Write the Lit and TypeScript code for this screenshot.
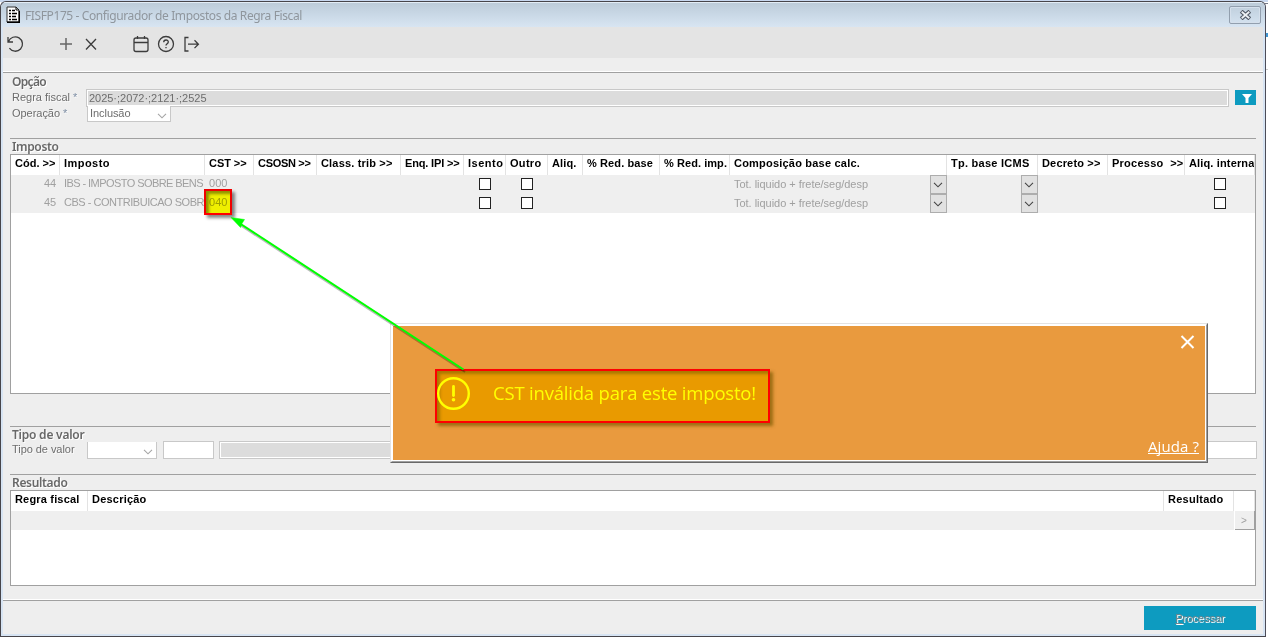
import { LitElement, html, css, svg, nothing } from "lit";
import { customElement, property } from "lit/decorators.js";
import { classMap } from "lit/directives/class-map.js";
import { styleMap } from "lit/directives/style-map.js";

/** One line of text whose tracking is adjusted so that it spans a given width. */
@customElement("fit-text")
class FitText extends LitElement {
  static styles = css`
    :host { display: inline-block; white-space: pre; flex: none; line-height: 14px; }
    span { display: inline-block; }
  `;
  @property({ type: Number }) w = 0;
  @property() text = "";
  render() {
    return html`<span>${this.text}</span>`;
  }
  updated() {
    const s = this.renderRoot.querySelector("span") as HTMLElement;
    s.style.letterSpacing = "0px";
    const natural = s.getBoundingClientRect().width;
    if (this.w && this.text.length > 1) {
      s.style.letterSpacing = (this.w - natural) / this.text.length + "px";
    }
  }
}

interface Column { label: string; width: number; text: number; }

const COLUMNS: Column[] = [
  { label: "Cód. >>", width: 49, text: 40.5 },
  { label: "Imposto", width: 145, text: 46 },
  { label: "CST >>", width: 49, text: 37.5 },
  { label: "CSOSN >>", width: 63, text: 52.5 },
  { label: "Class. trib >>", width: 84, text: 71.5 },
  { label: "Enq. IPI >>", width: 63, text: 54.5 },
  { label: "Isento", width: 42, text: 35.5 },
  { label: "Outro", width: 42, text: 31.5 },
  { label: "Aliq.", width: 35, text: 24.5 },
  { label: "% Red. base", width: 77, text: 66 },
  { label: "% Red. imp.", width: 70, text: 63 },
  { label: "Composição base calc.", width: 217, text: 126 },
  { label: "Tp. base ICMS", width: 91, text: 78.5 },
  { label: "Decreto >>", width: 70, text: 58.5 },
  { label: "Processo  >>", width: 77, text: 71.5 },
  { label: "Aliq. interna", width: 70, text: 65.5 },
];

const ROWS = [
  { code: "44", name: "IBS - IMPOSTO SOBRE BENS", nameW: 139, cst: "000" },
  { code: "45", name: "CBS - CONTRIBUICAO SOBR", nameW: 140, cst: "040" },
];

const chevron = html`<svg class="chev" width="10" height="6" viewBox="0 0 10 6"><path d="M1 .8 5 4.8 9 .8" fill="none" stroke="currentColor" stroke-width="1.1"/></svg>`;

@customElement("app-root")
class AppRoot extends LitElement {
  static styles = css`
    :host { display: block; width: 1268px; height: 637px; position: relative; overflow: hidden; background: #fff;
      font: 11px/14px "Liberation Sans", Arial, sans-serif; color: #6d6d6d; }
    * { box-sizing: border-box; }
    svg { display: block; flex: none; }
    .desk { height: 637px; background: linear-gradient(#c9d8ef 0 2px, #fff 2px); padding-top: 1px; }
    .win { width: 1266px; height: 636px; border: 1px solid #47454a; border-right-color: #4c4c58; border-bottom-width: 1px;
      border-radius: 6px 6px 0 0; background: #d7e4f3; padding: 0 2px 2px; display: flex; flex-direction: column; overflow: hidden; }
    .title { height: 25px; flex: none; margin: 0 -2px; padding: 0 4px 0 5px; display: flex; align-items: center;
      background: linear-gradient(#e3edf6 0 1px, #bdccd9 1px, #c9d8e6 50%, #d8e5f2);
      border-radius: 5px 5px 0 0; color: #8f969d; font: 12px "Noto Sans", sans-serif; }
    .title fit-text { margin: 3px 0 0 5px; }
    .close { margin: 0 0 0 auto; width: 32px; height: 18px; border: 1px solid #929fae; border-radius: 2px;
      box-shadow: inset 0 0 0 1px #d5e0ec; display: flex; align-items: center; justify-content: center; }
    .tools { height: 31px; flex: none; background: #e4e4e4; padding-left: 2px; }
    .body { flex: 1; background: #eeeeee; display: flex; flex-direction: column; }
    .rule { height: 2px; border-top: 1px solid #fff; background: #a0a0a0; flex: none; }
    .sec { margin: 0 7px; flex: none; display: flex; flex-direction: column; }
    .line { border-top: 1px solid #a0a0a0; }
    h2 { margin: 0; padding: 1px 0 0 2px; height: 15px; font: 600 12px/14px "Noto Sans", sans-serif; color: #686868; text-shadow: 1px 1px #fff; }
    .field { display: flex; align-items: flex-start; padding-left: 2px; }
    .field > * { flex: none; }
    .lab { width: 74px; white-space: pre; text-shadow: 1px 1px #fafafa; display: flex; gap: 3px; padding-top: 1px; }
    .lab i { font-style: normal; color: #7f8fa5; }
    .ro { background: #dcdcdc; border: 1px solid #c8c8c8; box-shadow: inset 0 0 0 1px #fff; height: 18px; padding: 1px 2px; white-space: pre; }
    .in { background: #fff; border: 1px solid #c8c8c8; height: 18px; }
    .combo { background: #fff; border: 1px solid #c8c8c8; border-top: 0; display: flex; justify-content: space-between; padding: 0 3px 0 2px; color: #a5a5a5; }
    .combo fit-text { color: #6d6d6d; }
    .combo .chev { margin: 7px 0 0 auto; }
    .filter { width: 21px; height: 15px; background: #0d9bc0; margin: 1px 0 0 6px; padding: 4px 0 0 7px; }
    .table { border: 1px solid #a0a0a0; background: #fff; overflow: hidden; flex: none; }
    .head, .row { display: flex; }
    .head { height: 20px; font-weight: bold; color: #000; }
    .cell { flex: none; overflow: hidden; display: flex; align-items: flex-start; padding-left: 4px; }
    .head .cell { border-right: 1px solid #e3e3e3; padding-top: 1px; }
    .row { height: 19px; background: #efefef; color: #a0a0a0; }
    .row .cell { padding-top: 1px; }
    .row .num { justify-content: flex-end; padding-right: 4px; }
    .row .mid { justify-content: center; padding: 3px 0 0; }
    .row .drop { justify-content: space-between; padding-top: 0; }
    .drop fit-text { margin-top: 2px; }
    .box { width: 12px; height: 12px; border: 1px solid #222; background: #fff; }
    .btn { width: 17px; height: 19px; margin-left: auto; background: #e1e1e1; border: 1px solid #adadad; color: #444; display: flex; align-items: center; justify-content: center; padding-right: 1px; }
    .more { margin-left: auto; width: 20px; height: 19px; background: #efefef; border-right: 1px solid #a0a0a0; border-bottom: 1px solid #a0a0a0;
      box-shadow: -1px 0 #fff; text-align: center; line-height: 20px; font-size: 10px; padding-right: 1px; }
    .foot { flex: 1; display: flex; justify-content: flex-end; padding: 5px 7px 0 0; }
    .go { width: 112px; height: 24px; background: #0d9bc0; color: #74848a; text-align: center; padding-top: 5px; text-shadow: 1px 1px #fff; }
    .go u { text-underline-offset: 1px; }
    .dialog { position: absolute; left: 390px; top: 323px; width: 818px; height: 140px; border: 1px solid; border-color: #e3e3e3 #696969 #696969 #e3e3e3; background: #fff; }
    .dialog-in { height: 138px; border: 1px solid; border-color: #fff #a0a0a0 #a0a0a0 #fff; padding: 1px; }
    .panel { height: 134px; background: #e99a3e; display: flex; flex-direction: column; align-items: flex-end; color: #fff; font-family: "Open Sans", "Noto Sans", sans-serif; }
    .panel .x { margin: 9px 10px 0 0; }
    .msg { align-self: stretch; height: 54px; margin: 20px 0 0 42px; width: 335px; display: flex; align-items: flex-start;
      border: 2px solid #f00; background: #e99a00; box-shadow: 3px 3px 3px #7a5a00b0, inset 3px 3px 3px #7a5a0090; }
    .warn { margin: 6px 0 0 0; }
    .msg fit-text { margin: 15px 0 0 23px; font-size: 18.5px; color: #ff0; line-height: 14px; }
    .help { margin: auto 6px 6px 0; font-size: 15px; border-bottom: 1px solid #fff; height: 15px; }
    .mark { position: absolute; left: 204px; top: 189px; width: 28px; height: 26px; border: 2px solid #f00; background: #ff0; mix-blend-mode: multiply;
      box-shadow: 3px 3px 3px #0007, inset 3px 3px 3px #0006; }
    .overlay { position: absolute; left: 0; top: 0; pointer-events: none; }
  `;

  private tools() {
    return html`<div class="tools"><svg width="220" height="31" viewBox="5 27 220 31" fill="none" stroke="#3c3c3c" stroke-width="1.3">
      <path d="M8 37v5h5M8.500 41.600A7.200 7.200 0 1 1 9.400 48.200"/>
      <path d="M60 44h12M66 38v12" stroke="#666" stroke-width="1.500"/>
      <path d="M86 39l10 10.500M96 39 86 49.500"/>
      <rect x="134" y="38" width="14" height="13.500" rx="2"/><path d="M134 42.500h14M137.500 36v3M144.500 36v3"/>
      <circle cx="166" cy="44" r="7.500"/><path d="M163.700 42.300c0-3 4.700-3 4.600-.3 0 1.700-2.300 1.700-2.300 3.500M166 47v1.300"/>
      <path d="M188.500 37.500H185v13.500h3.500M188 44.200h10M194.500 40.300l3.900 3.900-3.900 3.900"/>
    </svg></div>`;
  }

  private cell(i: number, row: (typeof ROWS)[number]) {
    const width = styleMap({ width: COLUMNS[i].width + "px" });
    const check = i === 6 || i === 7 || i === 15;
    const drop = i === 11 || i === 12;
    const cls = classMap({ cell: true, num: i === 0, mid: check, drop });
    const text = (t: string, w: number) => html`<fit-text .text=${t} .w=${w}></fit-text>`;
    return html`<div class=${cls} style=${width}>
      ${i === 0 ? text(row.code, 12) : nothing}${i === 1 ? text(row.name, row.nameW) : nothing}${i === 2 ? text(row.cst, 18.5) : nothing}
      ${i === 11 ? text("Tot. liquido + frete/seg/desp", 134) : nothing}
      ${check ? html`<div class="box"></div>` : nothing}${drop ? html`<div class="btn">${chevron}</div>` : nothing}
    </div>`;
  }

  private head(cols: Column[]) {
    return html`<div class="head">${cols.map((c) => html`<div class="cell" style=${styleMap({ width: c.width + "px" })}><fit-text .text=${c.label} .w=${c.text}></fit-text></div>`)}</div>`;
  }

  render() {
    return html`
      <div class="desk"><div class="win">
        <div class="title">
          <svg width="14" height="17" viewBox="0 0 14 17"><path d="M1 1h9l3 3v12H1z" fill="#fff" stroke="#333"/><path d="M10 1v3h3" fill="none" stroke="#000"/><path d="M3 4.500h2M3 7.500h2M3 10.500h2M3 13.500h2M6 4.500h3M6 7.500h5M6 10.500h4M6 13.500h5" fill="none" stroke="#000" stroke-width="1.500"/><path d="M1 16.300h12.300V5" fill="none" stroke="#000" stroke-width="1.400"/></svg>
          <fit-text .text=${"FISFP175 - Configurador de Impostos da Regra Fiscal"} .w=${277}></fit-text>
          <div class="close"><svg width="13" height="10" viewBox="0 0 12 9"><path d="M2 1l8 7M10 1 2 8" stroke="#535b68" stroke-width="3.800"/><path d="M2.500 1.500l7 6M9.500 1.500l-7 6" stroke="#edf1f5" stroke-width="1.600"/></svg></div>
        </div>
        ${this.tools()}
        <div class="body">
          <div class="rule" style="margin-top:13px"></div>
          <div class="sec" style="height:65px;padding-top:1px">
            <h2><fit-text .text=${"Opção"} .w=${34}></fit-text></h2>
            <div class="field">
              <span class="lab"><fit-text .text=${"Regra fiscal"} .w=${58}></fit-text><i>*</i></span>
              <div class="ro" style="width:1143px"><fit-text .text=${"2025·;2072·;2121·;2525"} .w=${117.5}></fit-text></div>
              <div class="filter"><svg width="10" height="9" viewBox="0 0 10 9"><path d="M0 0h10L6.500 4v5h-3V4z" fill="#fff"/></svg></div>
            </div>
            <div class="field" style="margin-top:-1px">
              <span class="lab" style="width:75px;padding-top:0"><fit-text .text=${"Operação"} .w=${48}></fit-text><i>*</i></span>
              <div class="combo" style="width:84px;height:16px"><fit-text .text=${"Inclusão"} .w=${40.5}></fit-text>${chevron}</div>
            </div>
          </div>
          <div class="sec line" style="height:288px">
            <h2><fit-text .text=${"Imposto"} .w=${46.5}></fit-text></h2>
            <div class="table" style="height:240px">
              ${this.head(COLUMNS)}
              ${ROWS.map((r) => html`<div class="row">${COLUMNS.map((_, i) => this.cell(i, r))}</div>`)}
            </div>
          </div>
          <div class="sec line" style="height:48px">
            <h2 style="height:14px"><fit-text .text=${"Tipo de valor"} .w=${72.5}></fit-text></h2>
            <div class="field">
              <span class="lab" style="width:75px"><fit-text .text=${"Tipo de valor"} .w=${62.5}></fit-text></span>
              <div class="combo" style="width:70px;height:17px;margin-top:1px">${chevron}</div>
              <div class="in" style="width:51px;margin-left:6px"></div>
              <div class="ro" style="width:880px;margin-left:5px"></div>
              <div class="in" style="width:152px;margin-left:6px"></div>
            </div>
          </div>
          <div class="sec line" style="height:125px">
            <h2><fit-text .text=${"Resultado"} .w=${55.5}></fit-text></h2>
            <div class="table" style="height:96px">
              ${this.head([{ label: "Regra fiscal", width: 77, text: 64.5 }, { label: "Descrição", width: 1076, text: 54.5 }, { label: "Resultado", width: 70, text: 55.5 }, { label: "", width: 21, text: 0 }])}
              <div class="row"><div class="more">&gt;</div></div>
            </div>
          </div>
          <div class="rule"></div>
          <div class="foot"><div class="go"><u>P</u>rocessar</div></div>
        </div>
      </div></div>
      <div class="mark"></div>
      <div class="dialog"><div class="dialog-in"><div class="panel">
        <svg class="x" width="15" height="14" viewBox="0 0 15 14"><path d="M1.500 1l12 12M13.500 1l-12 12" stroke="#fff" stroke-width="2"/></svg>
        <div class="msg">
          <svg class="warn" width="33" height="33" viewBox="0 0 33 33" fill="none" stroke="#ff0"><circle cx="16.500" cy="16.500" r="15.300" stroke-width="2.400"/><path d="M16.500 9.500v9" stroke-width="2.800" stroke-linecap="round"/><circle cx="16.500" cy="22.800" r="1.800" fill="#ff0" stroke="none"/></svg>
          <fit-text .text=${"CST inválida para este imposto!"} .w=${263}></fit-text>
        </div>
        <div class="help"><fit-text .text=${"Ajuda ?"} .w=${51}></fit-text></div>
      </div></div></div>
      <svg class="overlay" width="1268" height="637" viewBox="0 0 1268 637">
        ${svg`<path d="M465 372 240 225" stroke="#0004" stroke-width="2" fill="none"/>
        <path d="M463.500 369.500 240 223.500" stroke="#0f0" stroke-width="2" fill="none"/>
        <path d="M231 217.500l13.500 2-2.500 4-1.500 4z" fill="#0f0" stroke="#0f0" stroke-width=".5"/>
        <path d="M1266 33h2v4h-2z" fill="#3f94d0"/><path d="M1266 69.500h2" stroke="#ccc"/><path d="M1265 3.500h3" stroke="#777b88"/>`}
      </svg>`;
  }
}
